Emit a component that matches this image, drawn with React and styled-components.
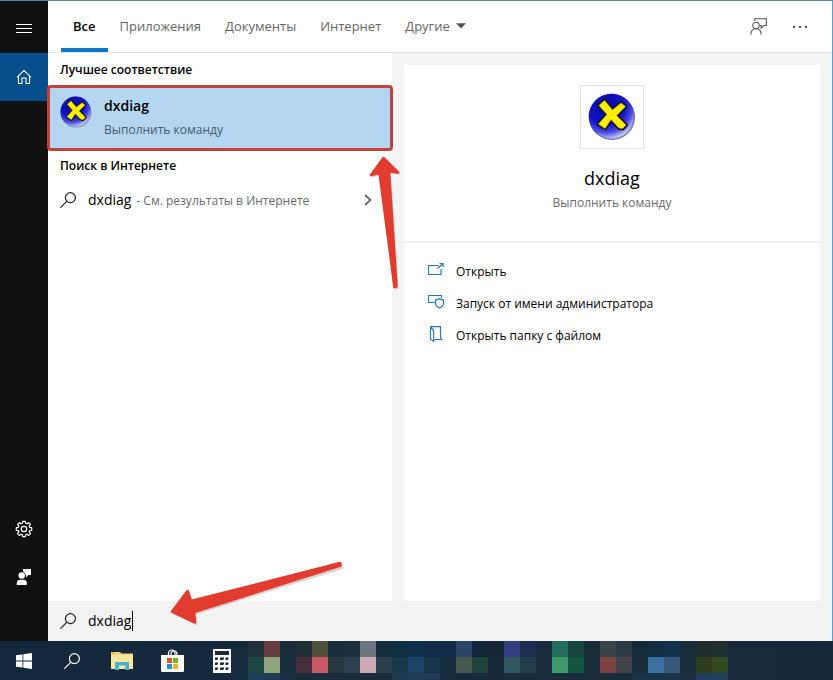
import React from "react";
import styled, { createGlobalStyle } from "styled-components";

const GlobalStyle = createGlobalStyle`
  *, *::before, *::after { box-sizing: border-box; }
  body {
    margin: 0;
    background: #fff;
    color: #111;
    font: 12px/20px "Open Sans", "Noto Sans", sans-serif;
  }
  button, input { font: inherit; color: inherit; }
  svg { display: block; flex: none; }
`;

const Screen = styled.div`
  display: flex;
  flex-direction: column;
  min-height: 100vh;
`;

const SearchWindow = styled.div`
  flex: 1;
  display: flex;
  border-top: 1px solid #5f82a5;
`;

const Rail = styled.nav`
  flex: none;
  width: 48px;
  display: flex;
  flex-direction: column;
  padding: 4px 0 40px;
  background: #101010;
  color: #fff;
`;

const RailButton = styled.button`
  display: grid;
  place-items: center;
  height: 48px;
  padding: 0;
  border: 0;
  margin-top: ${(p) => (p.$pushDown ? "auto" : "0")};
  background: ${(p) => (p.$active ? "#064e8c" : "transparent")};
`;

const Content = styled.div`
  flex: 1;
  min-width: 0;
  display: flex;
  flex-direction: column;
  border-right: 1px solid #5ba3cf;
`;

const Header = styled.header`
  display: flex;
  align-items: stretch;
  justify-content: space-between;
  height: 52px;
  padding: 0 16px 0 13px;
  border-bottom: 1px solid #e2e2e2;
`;

const Tabs = styled.div`
  display: flex;
`;

const Tab = styled.button`
  display: flex;
  align-items: center;
  gap: 6px;
  padding: 2px 12px 0;
  border: 0;
  border-bottom: 4px solid ${(p) => (p.$active ? "#0f75c5" : "transparent")};
  background: none;
  color: ${(p) => (p.$active ? "#000" : "#666")};
  font-size: 13px;
  font-weight: ${(p) => (p.$active ? 600 : 400)};
`;

const HeaderActions = styled.div`
  display: flex;
  align-items: center;
  gap: 10px;
`;

const IconButton = styled.button`
  display: grid;
  place-items: center;
  width: 32px;
  height: 32px;
  padding: 0;
  border: 0;
  background: none;
`;

const Panes = styled.main`
  flex: 1;
  display: grid;
  grid-template-columns: minmax(240px, 344px) minmax(0, 1fr);
`;

const Results = styled.section`
  background: #fff;
`;

const GroupTitle = styled.h2`
  margin: 0;
  padding: 2px 12px 0;
  font-size: 12px;
  font-weight: 600;
  line-height: 30px;
  color: #000;
`;

const BestMatch = styled.div`
  position: relative;
`;

const BestButton = styled.button`
  display: flex;
  gap: 12px;
  width: 100%;
  height: 64px;
  padding: 11px 12px;
  border: 0;
  background: #b4d6f1;
  text-align: left;
`;

const BestText = styled.span`
  display: flex;
  flex-direction: column;
  gap: 4px;
`;

const BestName = styled.strong`
  font-size: 14px;
  font-weight: 600;
  color: #000;
`;

const Muted = styled.span`
  color: ${(p) => (p.$dark ? "#4a5a68" : "#6a6a6a")};
`;

const RedFrame = styled.div`
  position: absolute;
  inset: 0 -1px -2px;
  border: 3px solid #c4403d;
  border-radius: 4px;
  pointer-events: none;
`;

const UpArrow = styled.svg`
  position: absolute;
  top: 70px;
  right: -9px;
  z-index: 1;
  pointer-events: none;
`;

const LeftArrow = styled.svg`
  position: absolute;
  left: 120px;
  bottom: 13px;
  pointer-events: none;
`;

const WebResult = styled.button`
  display: flex;
  align-items: center;
  width: 100%;
  height: 38px;
  padding: 0 20px 0 12px;
  border: 0;
  background: none;
  text-align: left;
`;

const WebText = styled.span`
  flex: 1;
  display: flex;
  align-items: baseline;
  gap: 5px;
  padding-left: 12px;
  white-space: nowrap;
`;

const Query = styled.span`
  font-size: 14px;
  color: #000;
`;

const PreviewPane = styled.section`
  display: flex;
  padding: 12px 12px 0;
  background: #f4f4f4;
`;

const Card = styled.article`
  flex: 1;
  background: #fff;
`;

const Summary = styled.div`
  display: flex;
  flex-direction: column;
  align-items: center;
  height: 178px;
  padding-top: 20px;
  border-bottom: 2px solid #f0f0f0;
`;

const AppTile = styled.div`
  display: grid;
  place-items: center;
  width: 64px;
  height: 64px;
  margin-bottom: 14px;
  border: 1px solid #e4e4e4;
`;

const AppName = styled.h1`
  margin: 0;
  font-size: 18px;
  font-weight: 400;
  line-height: 30px;
  color: #000;
`;

const ActionList = styled.ul`
  margin: 0;
  padding: 13px 24px;
  list-style: none;
`;

const Action = styled.button`
  display: flex;
  align-items: center;
  gap: 12px;
  height: 32px;
  padding: 0;
  border: 0;
  background: none;
  color: #000;
  white-space: nowrap;
`;

const ActionIcon = styled.span`
  padding-bottom: 4px;
`;

const SearchBar = styled.label`
  position: relative;
  display: flex;
  align-items: center;
  gap: 12px;
  height: 40px;
  padding: 0 12px;
  background: #f2f2f2;
`;

const Field = styled.div`
  flex: 1;
  display: flex;
  align-items: center;
`;

const SearchInput = styled.input`
  field-sizing: content;
  padding: 0;
  border: 0;
  outline: 0;
  background: none;
  font-size: 14px;
  color: #000;
`;

const Caret = styled.span`
  width: 1px;
  height: 20px;
  margin-left: 1px;
  background: #000;
`;

const Taskbar = styled.footer`
  display: flex;
  height: 39px;
  overflow: hidden;
  background: linear-gradient(90deg, #14283c, #162c3c 60%, #17283a);
`;

const TaskButtons = styled.div`
  display: flex;
  width: 248px;
  flex: none;
`;

const TaskButton = styled.button`
  display: grid;
  place-items: center;
  width: ${(p) => (p.$wide ? "52px" : "48px")};
  padding: 0;
  border: 0;
  background: none;
`;

const Mosaic = styled.div`
  display: grid;
  grid-template-columns: repeat(30, 16px);
  grid-template-rows: 16px 16px 7px;
`;

const Cell = styled.span`
  background: ${(p) => p.$color};
`;

const Magnifier = ({ color = "#222" }) => (
  <svg width="16" height="16" viewBox="0 0 16 16" fill="none" stroke={color} strokeWidth="1.2">
    <circle cx="10.4" cy="5.6" r="5" />
    <path d="M6.7 9.3L.3 15.7" />
  </svg>
);

const DxIcon = ({ size, id }) => (
  <svg width={size} height={size} viewBox="0 0 48 48">
    <defs>
      <radialGradient id={id} cx=".38" cy=".28" r=".8">
        <stop offset="0" stopColor="#0808a0" />
        <stop offset=".5" stopColor="#1212c4" />
        <stop offset=".72" stopColor="#4c4ce0" />
        <stop offset=".94" stopColor="#e6e6ff" />
      </radialGradient>
    </defs>
    <circle cx="24.2" cy="24.2" r="22.8" fill="#77778c" />
    <circle cx="23.5" cy="23.5" r="22.8" fill={`url(#${id})`} />
    <circle cx="23.5" cy="23.5" r="22.4" fill="none" stroke="#1515a0" strokeWidth=".8" opacity=".4" />
    <path d="M10 12.500L16.500 6.500L24.500 16L33 9L38.500 13.500L29.500 22.500L39 32L35 36.500L31 36L23 27.500L17.500 36.500L9.500 31.500L18 21.500Z" fill="#101018" stroke="#101030" strokeWidth="2" strokeLinejoin="round" />
    <path d="M11 12.500L16.500 7.500L24.500 17L33 10L37.500 13.500L28.500 22.500L38 32L34.500 35.500L31 35L23 26.500L17 35.500L10.500 31L19 21.500Z" fill="#fcf000" stroke="#c9bd08" strokeWidth=".6" />
  </svg>
);

const MenuIcon = () => (
  <svg width="16" height="10" viewBox="0 0 16 10" fill="#fff">
    <path d="M0 0h16v1H0zM0 4h16v1H0zM0 8h16v1H0z" />
  </svg>
);

const HomeIcon = () => (
  <svg width="16" height="16" viewBox="0 0 16 16" fill="none" stroke="#fff" strokeWidth="1.100">
    <path d="M1 8.300L8 1.400L15 8.300M2.500 7v7.500h3.500V9h4v5.500h3.500V7" />
  </svg>
);

const GearIcon = () => (
  <svg width="18" height="18" viewBox="-9 -9 18 18" fill="none" stroke="#fff" strokeWidth="1.200" strokeLinejoin="round">
    <path d="M-1.300-7.700H1.300L1.700-5.700L3-5.200L4.700-6.400L6.400-4.700L5.200-3L5.700-1.700L7.700-1.300V1.300L5.700 1.700L5.200 3L6.400 4.700L4.700 6.400L3 5.200L1.700 5.700L1.300 7.700H-1.300L-1.700 5.700L-3 5.200L-4.700 6.400L-6.400 4.700L-5.200 3L-5.700 1.700L-7.700 1.300V-1.300L-5.700-1.700L-5.200-3L-6.400-4.700L-4.700-6.400L-3-5.200L-1.700-5.700Z" />
    <circle r="2.700" />
  </svg>
);

const PersonIcon = () => (
  <svg width="16" height="16" viewBox="0 0 16 16" fill="#fff">
    <circle cx="5.700" cy="6.500" r="3.200" />
    <path d="M.8 16v-2a3.500 3.500 0 0 1 3.500-3.300h3a3.500 3.500 0 0 1 3.500 3.300v2zM7 0h8v6h-2.500L10 8.500V6H9.600A4.200 4.200 0 0 0 7 2.600z" />
  </svg>
);

const FeedbackIcon = () => (
  <svg width="17" height="17" viewBox="0 0 17 17" fill="none" stroke="#555" strokeWidth="1.100">
    <circle cx="6" cy="7.500" r="3.200" />
    <path d="M.8 16.500C1 12.800 3 10.800 6 10.800s5 2 5.200 5.700M4.800 3V.7h11.500V7.500h-2.500l-2.600 2.600V7.500H10" />
  </svg>
);

const DotsIcon = () => (
  <svg width="16" height="2" viewBox="0 0 16 2" fill="#555">
    <path d="M1 0h2v2H1zM7 0h2v2H7zM13 0h2v2h-2z" />
  </svg>
);

const DropIcon = () => (
  <svg width="10" height="6" viewBox="0 0 10 6" fill="#555">
    <path d="M0 .3h10L5 5.500z" />
  </svg>
);

const Chevron = () => (
  <svg width="8" height="12" viewBox="0 0 8 12" fill="none" stroke="#666" strokeWidth="1.800">
    <path d="M1 1l5.500 5L1 11" />
  </svg>
);

const actionDrawings = {
  open: <path d="M10.500 3.500H.5v9h12.500V7M9.500 6.500l5.500-5M11.500 1.500H15V5" />,
  admin: <path d="M7 8.500H.5v-7h13V4M11.500 4.500c1.200 1 2.500 1.400 4 1.400v3.300c0 2.200-1.700 3.800-4 4.800c-2.300-1-4-2.600-4-4.800V5.900c1.500 0 2.800-.4 4-1.400z" />,
  folder: <path d="M3 .6H12.500V11l1 2.500H6.500M2.500 .6V13l3.200 2.400V5.500C5.700 3.500 3.500 3 2.500 .6z" />,
};

const DrawAction = ({ name }) => (
  <svg width="16" height="16" viewBox="0 0 16 16" fill="none" stroke="#2379bd" strokeWidth="1.200">
    {actionDrawings[name]}
  </svg>
);

const WindowsIcon = () => (
  <svg width="16" height="16" viewBox="0 0 16 16" fill="#fff">
    <path d="M0 2.300L6.500 1.400V7.500H0zM7.300 1.200L16 0V7.500H7.300zM0 8.400h6.500v6.200L0 13.700zM7.300 8.400H16V16l-8.700-1.200z" />
  </svg>
);

const FolderIcon = () => (
  <svg width="22" height="18" viewBox="0 0 22 18">
    <path d="M0 0h9l1.500 1.500H22V17H0z" fill="#f1d37a" />
    <path d="M0 3h22v14H0z" fill="#fbe7a0" />
    <path d="M4 10h14v8h-3.800v-4.500H8V18H4z" fill="#43b4d8" />
    <path d="M1 .8h3v1H1z" fill="#d99c25" />
  </svg>
);

const StoreIcon = () => (
  <svg width="23" height="23" viewBox="0 0 23 23">
    <path d="M7.500 7V4.500C7.500-.2 14-.2 14 4.500V7M10 7V5C10 1 16 1 16 5v2" fill="none" stroke="#fff" strokeWidth="1.200" />
    <path d="M0 6h23v15.500q0 1.500-1.500 1.500h-20Q0 23 0 21.500z" fill="#fff" />
    <path d="M6 9h5v5H6z" fill="#d8532c" />
    <path d="M12 9h5v5h-5z" fill="#7aae22" />
    <path d="M6 15h5v5H6z" fill="#2493cf" />
    <path d="M12 15h5v5h-5z" fill="#edb51c" />
  </svg>
);

const CalculatorIcon = () => (
  <svg width="18" height="24" viewBox="0 0 18 24">
    <path d="M0 0h18v24H0z" fill="#fff" />
    <path d="M2 2h14v4H2zM2 8.500h3v1.500l-1 1H2zM7 8.500h4v1.500l-1 1H7zM12.500 8.500h3v1.500l-1 1h-2zM2 13.500h3v1.500l-1 1H2zM7 13.500h4v1.500l-1 1H7zM12.500 13.500h3v1.500l-1 1h-2zM2 18.500h3v1.500l-1 1H2zM7 18.500h4v1.500l-1 1H7zM12.500 18.500h3v1.500l-1 1h-2z" fill="#17293c" />
  </svg>
);

const tabs = ["Все", "Приложения", "Документы", "Интернет", "Другие"];

const actions = [
  ["open", "Открыть"],
  ["admin", "Запуск от имени администратора"],
  ["folder", "Открыть папку с файлом"],
];

const mosaic = [
  "#20303c #663c42 #1a2c3c #202e38 #50503e #1a2d3c #1c3040 #6c7480 #162c3c #102e44 #0f2f4c #112c48 #102c48 #2a4566 #122838 #142636 #353f80 #1f2c54 #1a2c3c #246c5c #184440 #182c3a #3a434a #2a3a46 #142c3a #122d44 #12324c #182c3a #1f2d2c #202f30",
  "#1c4840 #8da47e #182c3c #472e3c #c85a68 #2a363e #2e3f4e #ccaab4 #2c3d4b #193a4c #1a4368 #18364a #152b3b #43584f #1c4438 #162838 #305860 #233f4c #182c3c #3d986e #125440 #182c3a #7a4446 #41424a #182c3a #3c70a0 #38587a #182c3a #2c3c1c #34481f",
  "#1e3c54 #1e3c54 #1a2e40 #182c3c #182c3c #182c3c #182c3c #182c3c #182c3c #1c3a50 #1f3c54 #1f3c54 #152b3b #152b3b #152b3b #162838 #182c3c #182c3c #182c3c #182c3c #182c3c #182c3a #182c3a #182c3a #1b3145 #1c344a #1c344a #1a2e40 #203f5c #203f5c",
].flatMap((row) => row.split(" "));

export default function App() {
  return (
    <Screen>
      <GlobalStyle />
      <SearchWindow>
        <Rail>
          <RailButton aria-label="Меню"><MenuIcon /></RailButton>
          <RailButton $active aria-label="Главная"><HomeIcon /></RailButton>
          <RailButton $pushDown aria-label="Параметры"><GearIcon /></RailButton>
          <RailButton aria-label="Отзыв"><PersonIcon /></RailButton>
        </Rail>
        <Content>
          <Header>
            <Tabs role="tablist">
              {tabs.map((name, i) => (
                <Tab key={name} role="tab" aria-selected={i === 0} $active={i === 0}>
                  {name}
                  {name === "Другие" && <DropIcon />}
                </Tab>
              ))}
            </Tabs>
            <HeaderActions>
              <IconButton aria-label="Отправить отзыв"><FeedbackIcon /></IconButton>
              <IconButton aria-label="Ещё"><DotsIcon /></IconButton>
            </HeaderActions>
          </Header>
          <Panes>
            <Results>
              <GroupTitle>Лучшее соответствие</GroupTitle>
              <BestMatch>
                <BestButton>
                  <DxIcon size={32} id="dxSmall" />
                  <BestText>
                    <BestName>dxdiag</BestName>
                    <Muted $dark>Выполнить команду</Muted>
                  </BestText>
                </BestButton>
                <RedFrame />
                <UpArrow width="34" height="136" viewBox="0 0 34 136">
                  <path d="M17.500 4L32 18.500L23 17.500L30.500 133L27.500 133.500L13.500 19L5 21.500Z" fill="#b9a9a9" opacity=".5" stroke="#b9a9a9" strokeWidth="2" strokeLinejoin="round" />
                  <path d="M16.500 3L31 17.500L22 16.500L29.500 131.500L27.500 132L12.500 18L4 20Z" fill="#e23b30" stroke="#e23b30" strokeWidth="2.500" strokeLinejoin="round" />
                </UpArrow>
              </BestMatch>
              <GroupTitle>Поиск в Интернете</GroupTitle>
              <WebResult>
                <Magnifier />
                <WebText>
                  <Query>dxdiag</Query>
                  <Muted>- См. результаты в Интернете</Muted>
                </WebText>
                <Chevron />
              </WebResult>
            </Results>
            <PreviewPane>
              <Card>
                <Summary>
                  <AppTile><DxIcon size={48} id="dxLarge" /></AppTile>
                  <AppName>dxdiag</AppName>
                  <Muted>Выполнить команду</Muted>
                </Summary>
                <ActionList>
                  {actions.map(([icon, label]) => (
                    <li key={icon}>
                      <Action>
                        <ActionIcon><DrawAction name={icon} /></ActionIcon>
                        {label}
                      </Action>
                    </li>
                  ))}
                </ActionList>
              </Card>
            </PreviewPane>
          </Panes>
          <SearchBar>
            <Magnifier />
            <Field>
              <SearchInput aria-label="Поиск" defaultValue="dxdiag" />
              <Caret />
            </Field>
            <LeftArrow width="178" height="68" viewBox="0 0 178 68">
              <path d="M4 52L20.500 31L24 40.500L173 3.500L174.500 8L27 53.500L28.500 64Z" fill="#b9a9a9" opacity=".5" stroke="#b9a9a9" strokeWidth="2" strokeLinejoin="round" />
              <path d="M4 51.500L19.500 31L23 41L172 3L172.500 5.500L26 52L27 62.500Z" fill="#e23b30" stroke="#e23b30" strokeWidth="2.500" strokeLinejoin="round" />
            </LeftArrow>
          </SearchBar>
        </Content>
      </SearchWindow>
      <Taskbar>
        <TaskButtons>
          <TaskButton aria-label="Пуск"><WindowsIcon /></TaskButton>
          <TaskButton aria-label="Поиск в системе"><Magnifier color="#fff" /></TaskButton>
          <TaskButton $wide aria-label="Проводник"><FolderIcon /></TaskButton>
          <TaskButton aria-label="Магазин"><StoreIcon /></TaskButton>
          <TaskButton $wide aria-label="Калькулятор"><CalculatorIcon /></TaskButton>
        </TaskButtons>
        <Mosaic aria-hidden="true">
          {mosaic.map((color, i) => <Cell key={i} $color={color} />)}
        </Mosaic>
      </Taskbar>
    </Screen>
  );
}
